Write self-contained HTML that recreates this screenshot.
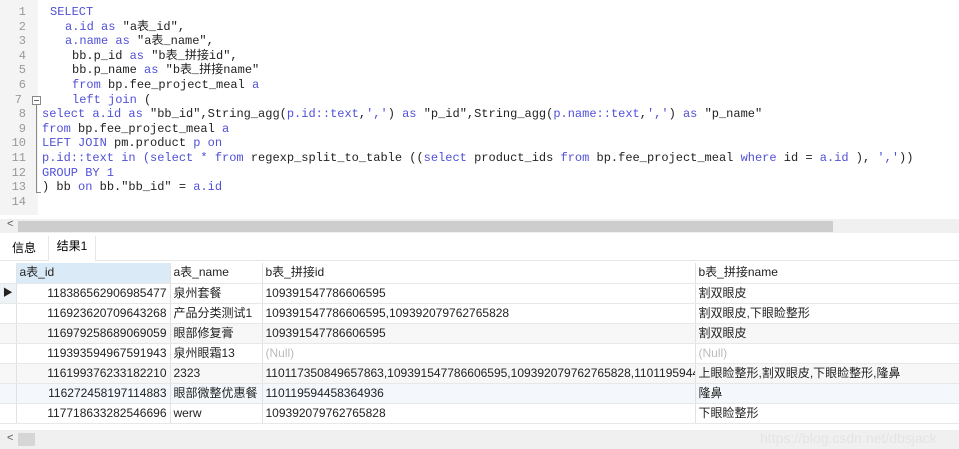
<!DOCTYPE html>
<html><head><meta charset="utf-8"><style>
*{margin:0;padding:0;box-sizing:border-box}
body{width:959px;height:449px;background:#fff;position:relative;overflow:hidden;font-family:"Liberation Sans","Noto Sans CJK SC",sans-serif}
.gut{position:absolute;left:0;top:0;width:38px;height:215px;background:#f4f4f4}
.code{position:absolute;left:0;top:5px;font-family:"Liberation Mono","Noto Sans CJK SC",monospace;font-size:12px;color:#222}
.ln{position:absolute;height:14.6px;line-height:14.6px;white-space:pre}
.n{position:absolute;width:26px;text-align:right;color:#999;left:0}
.k{color:#5050d8}
.sb{position:absolute;left:0;top:219px;width:959px;height:14px;background:#f0f0f0}
.th{position:absolute;left:18px;top:221px;width:815px;height:11px;background:#cdcdcd}
.tabs{position:absolute;top:236px;left:0;width:959px;height:25px;background:#fff;border-bottom:1px solid #e6e6e6;font-size:12px}
.tab{position:absolute;top:0;height:25px;line-height:25px}
table{position:absolute;left:0;top:263px;width:959px;border-collapse:collapse;font-size:12px;font-family:"Liberation Sans","Noto Sans CJK SC",sans-serif;color:#222;table-layout:fixed}
td{height:20px;line-height:19px;border-right:1px solid #e2e2e2;border-bottom:1px solid #e8e8e8;padding:0 3px;white-space:nowrap;overflow:hidden}
td.i{border-right:1px solid #e2e2e2;padding:0;background:#fafafa}
td.r{text-align:right}
tr.h td{background:#fff}
tr.a td{background:#f7f7f7}
tr.b td{background:#f4f8fc}
.nul{color:#bbb}
.bsb{position:absolute;left:0;top:430px;width:959px;height:19px;background:#f0f0f0}
</style></head><body>
<div class="gut"></div>
<div style="position:absolute;left:36px;top:100px;width:1px;height:92px;background:#888"></div>
<div style="position:absolute;left:32px;top:96px;width:9px;height:9px;border:1px solid #888;background:#fff"></div>
<div style="position:absolute;left:34px;top:100px;width:5px;height:1px;background:#666"></div>
<div style="position:absolute;left:36px;top:192px;width:5px;height:1px;background:#888"></div>
<div class="code">
<div class="ln" style="top:0"><span class="n">1</span><span style="position:absolute;left:50px" class="k">SELECT</span></div>
<div class="ln" style="top:14.6px"><span class="n">2</span><span style="position:absolute;left:65px"><span class="k">a.id as</span> "a表_id",</span></div>
<div class="ln" style="top:29.2px"><span class="n">3</span><span style="position:absolute;left:65px"><span class="k">a.name as</span> "a表_name",</span></div>
<div class="ln" style="top:43.8px"><span class="n">4</span><span style="position:absolute;left:72px">bb.p_id <span class="k">as</span> "b表_拼接id",</span></div>
<div class="ln" style="top:58.4px"><span class="n">5</span><span style="position:absolute;left:72px">bb.p_name <span class="k">as</span> "b表_拼接name"</span></div>
<div class="ln" style="top:73px"><span class="n">6</span><span style="position:absolute;left:72px"><span class="k">from</span> bp.fee_project_meal <span class="k">a</span></span></div>
<div class="ln" style="top:87.6px"><span class="n" style="width:22px">7</span><span style="position:absolute;left:72px"><span class="k">left join</span> (</span></div>
<div class="ln" style="top:102.2px"><span class="n">8</span><span style="position:absolute;left:42px"><span class="k">select a.id as</span> "bb_id",String_agg(<span class="k">p.id::text</span>,<span class="k">','</span>) <span class="k">as</span> "p_id",String_agg(<span class="k">p.name::text</span>,<span class="k">','</span>) <span class="k">as</span> "p_name"</span></div>
<div class="ln" style="top:116.8px"><span class="n">9</span><span style="position:absolute;left:42px"><span class="k">from</span> bp.fee_project_meal <span class="k">a</span></span></div>
<div class="ln" style="top:131.4px"><span class="n">10</span><span style="position:absolute;left:42px"><span class="k">LEFT JOIN</span> pm.product <span class="k">p on</span></span></div>
<div class="ln" style="top:146px"><span class="n">11</span><span style="position:absolute;left:42px"><span class="k">p.id::text in (select * from</span> regexp_split_to_table ((<span class="k">select</span> product_ids <span class="k">from</span> bp.fee_project_meal <span class="k">where</span> id = <span class="k">a.id</span> ), <span class="k">','</span>))</span></div>
<div class="ln" style="top:160.6px"><span class="n">12</span><span style="position:absolute;left:42px" class="k">GROUP BY 1</span></div>
<div class="ln" style="top:175.2px"><span class="n">13</span><span style="position:absolute;left:42px">) bb <span class="k">on</span> bb."bb_id" = <span class="k">a.id</span></span></div>
<div class="ln" style="top:189.8px"><span class="n">14</span></div>
</div>
<div class="sb"><span style="position:absolute;left:7px;top:-1px;font-size:11px;color:#555">&lt;</span></div>
<div class="th"></div>
<div class="tabs">
<div class="tab" style="left:12px">信息</div>
<div class="tab" style="left:48px;width:48px;background:#fff;text-align:center;border-left:1px solid #e6e6e6;border-right:1px solid #e6e6e6;line-height:20px">结果1</div>
</div>
<table>
<colgroup><col style="width:16px"><col style="width:154px"><col style="width:92px"><col style="width:433px"><col style="width:264px"></colgroup>
<tr class="h"><td class="i" style="background:#fff"></td><td style="background:#dbeaf7">a表_id</td><td>a表_name</td><td>b表_拼接id</td><td>b表_拼接name</td></tr>
<tr class="h"><td class="i" style="background:#eef3f8;font-size:10px;text-align:center">▶</td><td class="r">118386562906985477</td><td>泉州套餐</td><td>109391547786606595</td><td>割双眼皮</td></tr>
<tr class="h"><td class="i"></td><td class="r">116923620709643268</td><td>产品分类测试1</td><td>109391547786606595,109392079762765828</td><td>割双眼皮,下眼睑整形</td></tr>
<tr class="a"><td class="i"></td><td class="r">116979258689069059</td><td>眼部修复膏</td><td>109391547786606595</td><td>割双眼皮</td></tr>
<tr class="h"><td class="i"></td><td class="r">119393594967591943</td><td>泉州眼霜13</td><td class="nul">(Null)</td><td class="nul">(Null)</td></tr>
<tr class="a"><td class="i"></td><td class="r">116199376233182210</td><td>2323</td><td>110117350849657863,109391547786606595,109392079762765828,110119594458</td><td>上眼睑整形,割双眼皮,下眼睑整形,隆鼻</td></tr>
<tr class="b"><td class="i"></td><td class="r">116272458197114883</td><td>眼部微整优惠餐</td><td>110119594458364936</td><td>隆鼻</td></tr>
<tr class="h"><td class="i"></td><td class="r">117718633282546696</td><td>werw</td><td>109392079762765828</td><td>下眼睑整形</td></tr>
</table>
<div class="bsb"><span style="position:absolute;left:7px;top:2px;font-size:11px;color:#555">&lt;</span><div style="position:absolute;left:18px;top:3px;width:17px;height:13px;background:#d6d6d6"></div><span style="position:absolute;left:760px;top:0;font-size:14px;color:#e4e4e4">https://blog.csdn.net/dbsjack</span></div>
</body></html>
